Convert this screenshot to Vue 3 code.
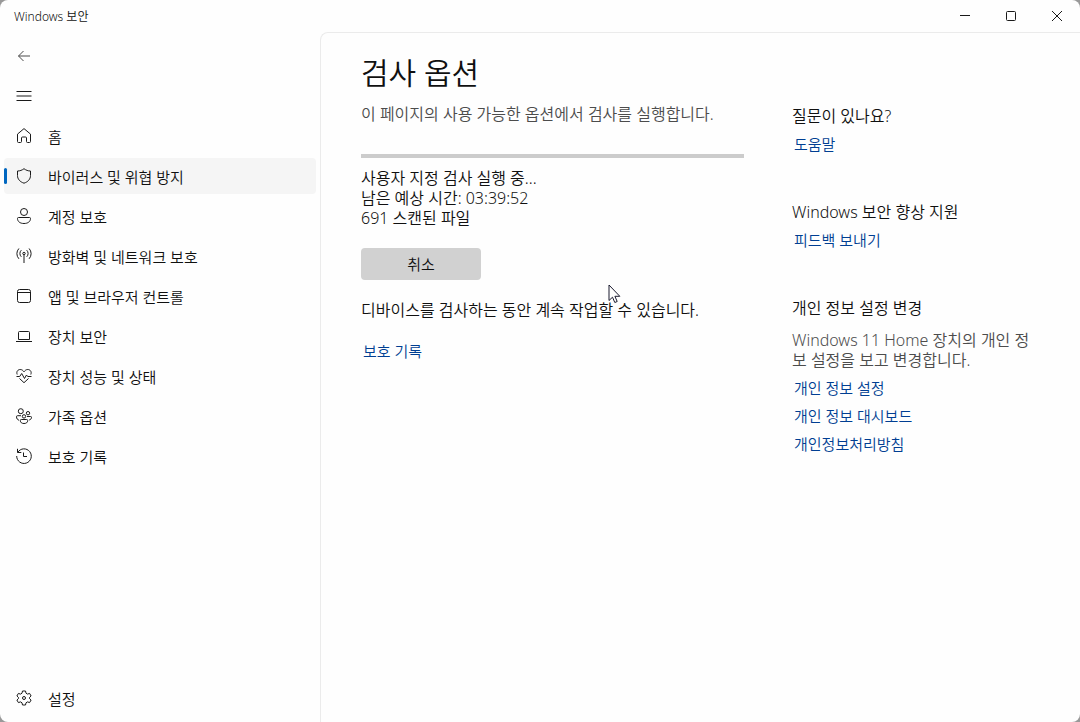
<script setup>
import { ref } from 'vue';

const active = ref('virus');
const scanning = ref(true);

const navItems = [
  { id: 'home', text: '홈' },
  { id: 'virus', text: '바이러스 및 위협 방지' },
  { id: 'account', text: '계정 보호' },
  { id: 'firewall', text: '방화벽 및 네트워크 보호' },
  { id: 'app', text: '앱 및 브라우저 컨트롤' },
  { id: 'device', text: '장치 보안' },
  { id: 'health', text: '장치 성능 및 상태' },
  { id: 'family', text: '가족 옵션' },
  { id: 'history', text: '보호 기록' },
]

// 16x16 stroke paths
const icons = {
  back: 'M14 8H2.5M7.5 3L2.5 8l5 5',
  menu: 'M.5 3.5h15M.5 8h15M.5 12.5h15',
  home: 'M1.5 6.1L8 .6l6.500 5.500V13.500q0 1-1 1h-2q-1 0-1-1v-3.500q0-1-1-1h-3q-1 0-1 1V13.500q0 1-1 1h-2q-1 0-1-1z',
  virus: 'M8 .7C10 2.200 12 3 14.500 3v4.500c0 3.700-2.500 6.300-6.500 7.700-4-1.400-6.500-4-6.500-7.700V3C4 3 6 2.200 8 .7z',
  account: 'M8 .5a3.500 3.500 0 1 1 0 7 3.500 3.500 0 0 1 0-7zM2.500 9.500h11q1 0 1 1c0 3-2.500 5-6.500 5s-6.500-2-6.500-5q0-1 1-1z',
  firewall: 'M8 6.500V15M8 4.300a1.200 1.200 0 1 1 0 2.400 1.200 1.200 0 0 1 0-2.400zM5.300 8.800a4.600 4.600 0 0 1 0-6.600M10.700 8.800a4.600 4.600 0 0 0 0-6.600M2.900 10.800a7.600 7.600 0 0 1 0-10.300M13.100 10.800a7.600 7.600 0 0 0 0-10.300',
  app: 'M3.500 1.500h9q2 0 2 2v9q0 2-2 2h-9q-2 0-2-2v-9q0-2 2-2zM1.500 4.500h13',
  device: 'M3.500 3.500h9q1 0 1 1v7h-11v-7q0-1 1-1zM0 13.500h16',
  health: 'M1.200 6.500C0 3.500 2 1.500 4.200 1.500 6 1.500 7 2.500 8 3.800c1-1.300 2-2.300 3.800-2.300 2.200 0 4.200 2 3 5M.5 8.500h3.200l2-3 2.800 5 2-3.500 1.200 1.500h3.800M3.500 10.500L8 14.700l4.500-4.200',
  family: 'M4.800.7a2.500 2.500 0 1 1 0 5 2.500 2.500 0 0 1 0-5zM12 3.500a1.700 1.700 0 1 1 0 3.400 1.700 1.700 0 0 1 0-3.400zM8 6.700a1.700 1.700 0 1 1 0 3.400 1.700 1.700 0 0 1 0-3.400zM5 7.700H1.500q-1 0-1 1c0 1.800 1 3.200 2.500 3.500M11 8.500h3.500q1 0 1 .8c0 1.500-1 2.500-2.300 2.700M5.300 11.500h5.400q1 0 1 1c0 2-1.500 3-3.700 3s-3.700-1-3.700-3q0-1 1-1z',
  history: 'M1.500.8v3.700h3.800M1.800 4.300A7.300 7.300 0 1 1 .7 8M7.500 4.500v4h3.500',
  settings: 'M6.500 1h3l.5 2.200 1.500.9 2.100-.700 1.500 2.600L13.500 7.500v1l1.600 1.500-1.500 2.600-2.100-.7-1.500.9-.5 2.200h-3L6 12.800l-1.500-.9-2.100.7L.9 10l1.600-1.500v-1L.9 6l1.500-2.600 2.100.7L6 3.200zM8 6.500a1.500 1.500 0 1 1 0 3 1.500 1.500 0 0 1 0-3z',
}

const sections = [
  { title: '질문이 있나요?', links: ['도움말'] },
  { title: 'Windows 보안 향상 지원', links: ['피드백 보내기'] },
  {
    title: '개인 정보 설정 변경',
    text: 'Windows 11 Home 장치의 개인 정보 설정을 보고 변경합니다.',
    links: ['개인 정보 설정', '개인 정보 대시보드', '개인정보처리방침']
  },
]
</script>

<template>
  <div class="window">
    <header class="titlebar">
      <span class="titlebar__name">Windows 보안</span>
      <div class="titlebar__buttons">
        <button aria-label="최소화">
          <svg viewBox="0 0 12 12"><path d="M1 5.500h10" /></svg>
        </button>
        <button aria-label="최대화">
          <svg viewBox="0 0 12 12"><rect x="1.500" y="1.500" width="9" height="9" rx="1" /></svg>
        </button>
        <button aria-label="닫기">
          <svg viewBox="0 0 12 12"><path d="M1 1l10 10M11 1L1 11" /></svg>
        </button>
      </div>
    </header>

    <div class="body">
      <nav class="sidebar">
        <button class="nav__item nav__item--back" aria-label="뒤로">
          <svg class="icon" viewBox="0 0 16 16"><path :d="icons.back" /></svg>
        </button>
        <button class="nav__item" aria-label="메뉴">
          <svg class="icon" viewBox="0 0 16 16"><path :d="icons.menu" /></svg>
        </button>
        <button
          v-for="item in navItems"
          :key="item.id"
          class="nav__item"
          :class="{ active: active === item.id }"
          @click="active = item.id"
        >
          <svg class="icon" viewBox="0 0 16 16"><path :d="icons[item.id]" /></svg>
          <span>{{ item.text }}</span>
        </button>
        <button class="nav__item nav__item--bottom">
          <svg class="icon" viewBox="0 0 16 16"><path :d="icons.settings" /></svg>
          <span>설정</span>
        </button>
      </nav>

      <main class="content">
        <section class="scan">
          <h1>검사 옵션</h1>
          <p class="muted">이 페이지의 사용 가능한 옵션에서 검사를 실행합니다.</p>
          <div class="scan__bar" role="progressbar" aria-label="검사 진행률"></div>
          <div class="scan__status">
            <p>사용자 지정 검사 실행 중...</p>
            <p>남은 예상 시간: 03:39:52</p>
            <p>691 스캔된 파일</p>
          </div>
          <button class="scan__cancel" :disabled="!scanning" @click="scanning = false">취소</button>
          <div class="scan__note">
            <p>디바이스를 검사하는 동안 계속 작업할 수 있습니다.</p>
            <svg class="pointer" viewBox="0 0 13 20">
              <path d="M1 1v15.500l3.500-3.300 2.300 5.300 2.400-1-2.300-5.200h4.900z" />
            </svg>
          </div>
          <a class="link" href="#">보호 기록</a>
        </section>

        <aside class="help">
          <section v-for="section in sections" :key="section.title" class="help__section">
            <h2>{{ section.title }}</h2>
            <p v-if="section.text" class="muted">{{ section.text }}</p>
            <a v-for="link in section.links" :key="link" class="link" href="#">{{ link }}</a>
          </section>
        </aside>
      </main>
    </div>
  </div>
</template>

<style>
  body {
    margin: 0;
    background: #999;
  }
</style>

<style scoped>
  .window {
    display: flex;
    flex-direction: column;
    min-height: 100vh;
    background: #fefefe;
    border-radius: 8px;
    overflow: hidden;
    color: #101010;
    font-family: "Noto Sans", "Noto Sans CJK KR DemiLight", "Noto Sans CJK KR", sans-serif;
    font-size: 16px;
    font-weight: 350;
    line-height: 20px;
  }
  h1, h2, p {
    margin: 0;
    font-weight: inherit;
  }
  button {
    border: 0;
    padding: 0;
    background: none;
    color: inherit;
    font: inherit;
  }
  svg {
    fill: none;
    stroke: #1a1a1a;
  }
  .titlebar {
    display: flex;
    justify-content: space-between;
    height: 32px;
  }
  .titlebar__name {
    padding-left: 14px;
    font-size: 12px;
    line-height: 34px;
  }
  .titlebar__buttons {
    display: flex;
  }
  .titlebar__buttons button {
    display: flex;
    align-items: center;
    justify-content: center;
    width: 46px;
  }
  .titlebar__buttons svg {
    width: 12px;
    height: 12px;
  }
  .body {
    display: flex;
    flex: 1;
  }
  .sidebar {
    display: flex;
    flex-direction: column;
    gap: 4px;
    flex: 0 0 320px;
    box-sizing: border-box;
    padding: 6px 4px;
  }
  .nav__item {
    position: relative;
    display: flex;
    align-items: center;
    gap: 16px;
    height: 36px;
    padding: 0 12px;
    border-radius: 4px;
    font-size: 15px;
    text-align: left;
  }
  .nav__item span {
    padding-top: 2px;
  }
  .nav__item.active {
    background: #f5f5f5;
  }
  .nav__item.active::before {
    content: "";
    position: absolute;
    left: 0;
    top: 10px;
    width: 3px;
    height: 16px;
    border-radius: 2px;
    background: #0067c0;
  }
  .nav__item--back svg {
    stroke: #4a4a4a;
  }
  .nav__item--bottom {
    margin-top: auto;
  }
  .icon {
    flex: none;
    width: 16px;
    height: 16px;
  }
  .content {
    display: flex;
    flex: 1;
    gap: 48px;
    padding: 20px 32px 20px 40px;
    border-top: 1px solid #ebebeb;
    border-left: 1px solid #ebebeb;
    border-top-left-radius: 8px;
  }
  .scan {
    flex: 0 1 383px;
  }
  h1 {
    margin-bottom: 11px;
    font-size: 30px;
    line-height: 40px;
  }
  h2 {
    font-size: 16px;
  }
  .muted {
    color: #4c4c4c;
  }
  .scan__bar {
    height: 4px;
    margin: 30px 0 10px;
    background: #ccc;
  }
  .scan__cancel {
    width: 120px;
    height: 32px;
    margin: 20px 0;
    border-radius: 4px;
    background: #d1d1d1;
    font-size: 15px;
  }
  .scan__note {
    position: relative;
    margin-bottom: 21px;
  }
  .pointer {
    position: absolute;
    left: 247px;
    top: -16px;
    width: 13px;
    height: 20px;
    pointer-events: none;
  }
  .pointer path {
    fill: #fff;
    stroke: #1a1a2e;
  }
  .link {
    display: block;
    padding-left: 2px;
    color: #003e92;
    font-size: 15px;
    text-decoration: none;
  }
  .help {
    display: flex;
    flex-direction: column;
    gap: 48px;
    flex: 0 1 244px;
    padding-top: 53px;
  }
  .help__section {
    display: flex;
    flex-direction: column;
    gap: 8px;
  }
  .help__section .muted {
    margin-top: 4px;
    word-break: break-all;
  }
</style>
